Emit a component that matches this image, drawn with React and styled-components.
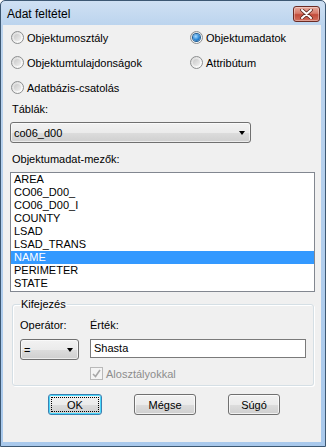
import styled, { createGlobalStyle } from 'styled-components'

const Global = createGlobalStyle`
  html, body { margin: 0; padding: 0; background: #fff; }
  body {
    font-family: "Liberation Sans", Arial, sans-serif;
    font-size: 11px;
    color: #000;
  }
  * { box-sizing: border-box; }
`

const Janela = styled.div`
  width: 326px;
  height: 447px;
  border: 1px solid #3d5873;
  border-radius: 5px 5px 0 0;
  background: linear-gradient(#cfe0f3, #bcd4ee 24px, #a9c9ec);
  padding: 0 4px 4px 2px;
  display: flex;
  flex-direction: column;
`

const Barra = styled.div`
  height: 24px;
  display: flex;
  align-items: center;
  justify-content: space-between;
  padding-left: 4px;
  padding-right: 1px;
`

const Titulo = styled.span`
  font-size: 12px;
  color: #000;
  margin-top: 1px;
`

const Fechar = styled.div`
  width: 27px;
  height: 16px;
  margin-top: 1px;
  border: 1px solid #6b2b24;
  border-radius: 3px;
  background: linear-gradient(#e6a99d, #d77a6a 45%, #c24b3a 55%, #d26f5e);
  box-shadow: inset 0 0 0 1px rgba(255, 255, 255, 0.35);
  display: flex;
  align-items: center;
  justify-content: center;
`

const Corpo = styled.div`
  flex: 1;
  background: #f0f0f0;
  display: flex;
  flex-direction: column;
`

const Radios = styled.div`
  display: grid;
  grid-template-columns: 179px 1fr;
  grid-auto-rows: 25px;
  padding-left: 8px;
`

const Opcao = styled.label`
  display: flex;
  align-items: center;
  gap: 3px;
`

const Circulo = styled.span`
  width: 13px;
  height: 13px;
  border-radius: 50%;
  border: 1px solid #8c8e8f;
  background: linear-gradient(135deg, #d6d6d6, #f7f7f7 70%, #ffffff);
  display: flex;
  align-items: center;
  justify-content: center;
  flex-shrink: 0;
  &::after {
    content: '';
    width: 7px;
    height: 7px;
    border-radius: 50%;
    background: ${p => (p.$marcado ? 'radial-gradient(circle at 40% 35%, #a9dcff, #2a86d6 55%, #134a80)' : 'linear-gradient(135deg, #c8c8c8, #f0f0f0)')};
    box-shadow: ${p => (p.$marcado ? '0 0 0 1px #1f5d94' : 'none')};
  }
`

const Rotulo = styled.div`
  line-height: 13px;
  margin: ${p => p.$topo}px 0 0 9px;
`

const Combo = styled.div`
  height: ${p => p.$altura || 21}px;
  width: ${p => p.$largura}px;
  margin: ${p => p.$margem || '0'};
  border: 1px solid #707070;
  border-radius: 3px;
  background: linear-gradient(#f2f2f2, #ebebeb 50%, #dddddd 50%, #cfcfcf);
  box-shadow: inset 0 0 0 1px rgba(255, 255, 255, 0.6);
  display: flex;
  align-items: center;
  justify-content: space-between;
  padding: 0 5px 0 3px;
`

const Seta = styled.span`
  width: 0;
  height: 0;
  border-left: 3.5px solid transparent;
  border-right: 3.5px solid transparent;
  border-top: 4px solid #000;
  margin-top: 1px;
`

const Lista = styled.div`
  height: 120px;
  margin: 6px 6px 0 7px;
  border: 1px solid #828790;
  background: #fff;
`

const Item = styled.div`
  height: 13px;
  line-height: 13px;
  padding-left: 3px;
  background: ${p => (p.$ativo ? '#3399ff' : 'transparent')};
  color: ${p => (p.$ativo ? '#fff' : '#000')};
`

const Grupo = styled.fieldset`
  margin: 6px 7px 0 9px;
  padding: 8px 7px 5px 7px;
  border: 1px solid #d5dfe5;
  border-radius: 3px;
  box-shadow: inset 1px 1px 0 #fff, 1px 1px 0 #fff;
  display: grid;
  grid-template-columns: 70px 1fr;
  grid-template-rows: 13px 21px 13px;
  row-gap: 7px;
  min-width: 0;
`

const Legenda = styled.legend`
  padding: 0 1px;
  line-height: 13px;
`

const Texto = styled.span`
  line-height: 13px;
`

const Campo = styled.div`
  height: 19px;
  border: 1px solid #7a7a7a;
  background: #fff;
  padding-left: 3px;
  line-height: 17px;
`

const Marcar = styled.label`
  grid-column: 2;
  display: flex;
  align-items: center;
  gap: 3px;
  color: #8d8d8d;
`

const Caixa = styled.span`
  width: 13px;
  height: 13px;
  border: 1px solid #b9b9b9;
  background: #f4f4f4;
  display: flex;
  align-items: center;
  justify-content: center;
`

const Botoes = styled.div`
  display: flex;
  gap: 32px;
  margin: 8px 0 0 45px;
`

const Botao = styled.div`
  width: ${p => p.$largura}px;
  height: 21px;
  border: 1px solid ${p => (p.$padrao ? '#3c7fb1' : '#707070')};
  border-radius: 3px;
  background: linear-gradient(#f2f2f2, #ebebeb 50%, #dddddd 50%, #cfcfcf);
  box-shadow: inset 0 0 0 1px ${p => (p.$padrao ? '#48d8fb' : 'rgba(255,255,255,0.7)')};
  outline: ${p => (p.$padrao ? '1px dotted #000' : 'none')};
  outline-offset: -4px;
  display: flex;
  align-items: center;
  justify-content: center;
`

const campos = ['AREA', 'CO06_D00_', 'CO06_D00_I', 'COUNTY', 'LSAD', 'LSAD_TRANS', 'NAME', 'PERIMETER', 'STATE']

function AdatFeltetel() {
  return (
    <Janela>
      <Barra>
        <Titulo>Adat feltétel</Titulo>
        <Fechar>
          <svg width="13" height="10" viewBox="0 0 13 10">
            <path d="M2 1 L11 9 M11 1 L2 9" stroke="#5a2a22" strokeWidth="3.6" strokeLinecap="round" />
            <path d="M2 1 L11 9 M11 1 L2 9" stroke="#fff" strokeWidth="2" strokeLinecap="round" />
          </svg>
        </Fechar>
      </Barra>
      <Corpo>
        <Radios>
          <Opcao><Circulo />Objektumosztály</Opcao>
          <Opcao><Circulo $marcado />Objektumadatok</Opcao>
          <Opcao><Circulo />Objektumtulajdonságok</Opcao>
          <Opcao><Circulo />Attribútum</Opcao>
          <Opcao><Circulo />Adatbázis-csatolás</Opcao>
        </Radios>
        <Rotulo $topo={3}>Táblák:</Rotulo>
        <Combo $largura={241} $margem="6px 0 0 7px">
          <span>co06_d00</span>
          <Seta />
        </Combo>
        <Rotulo $topo={10}>Objektumadat-mezők:</Rotulo>
        <Lista>
          {campos.map(c => (
            <Item key={c} $ativo={c === 'NAME'}>{c}</Item>
          ))}
        </Lista>
        <Grupo>
          <Legenda>Kifejezés</Legenda>
          <Texto>Operátor:</Texto>
          <Texto>Érték:</Texto>
          <Combo $largura={59}>
            <span>=</span>
            <Seta />
          </Combo>
          <Campo>Shasta</Campo>
          <Marcar>
            <Caixa>
              <svg width="9" height="9" viewBox="0 0 9 9">
                <path d="M1 5 L3.5 7.5 L8 1" fill="none" stroke="#a8a8a8" strokeWidth="1.6" />
              </svg>
            </Caixa>
            Alosztályokkal
          </Marcar>
        </Grupo>
        <Botoes>
          <Botao $largura={54} $padrao>OK</Botao>
          <Botao $largura={62}>Mégse</Botao>
          <Botao $largura={52}>Súgó</Botao>
        </Botoes>
      </Corpo>
    </Janela>
  )
}

export default function App() {
  return (
    <>
      <Global />
      <AdatFeltetel />
    </>
  )
}
